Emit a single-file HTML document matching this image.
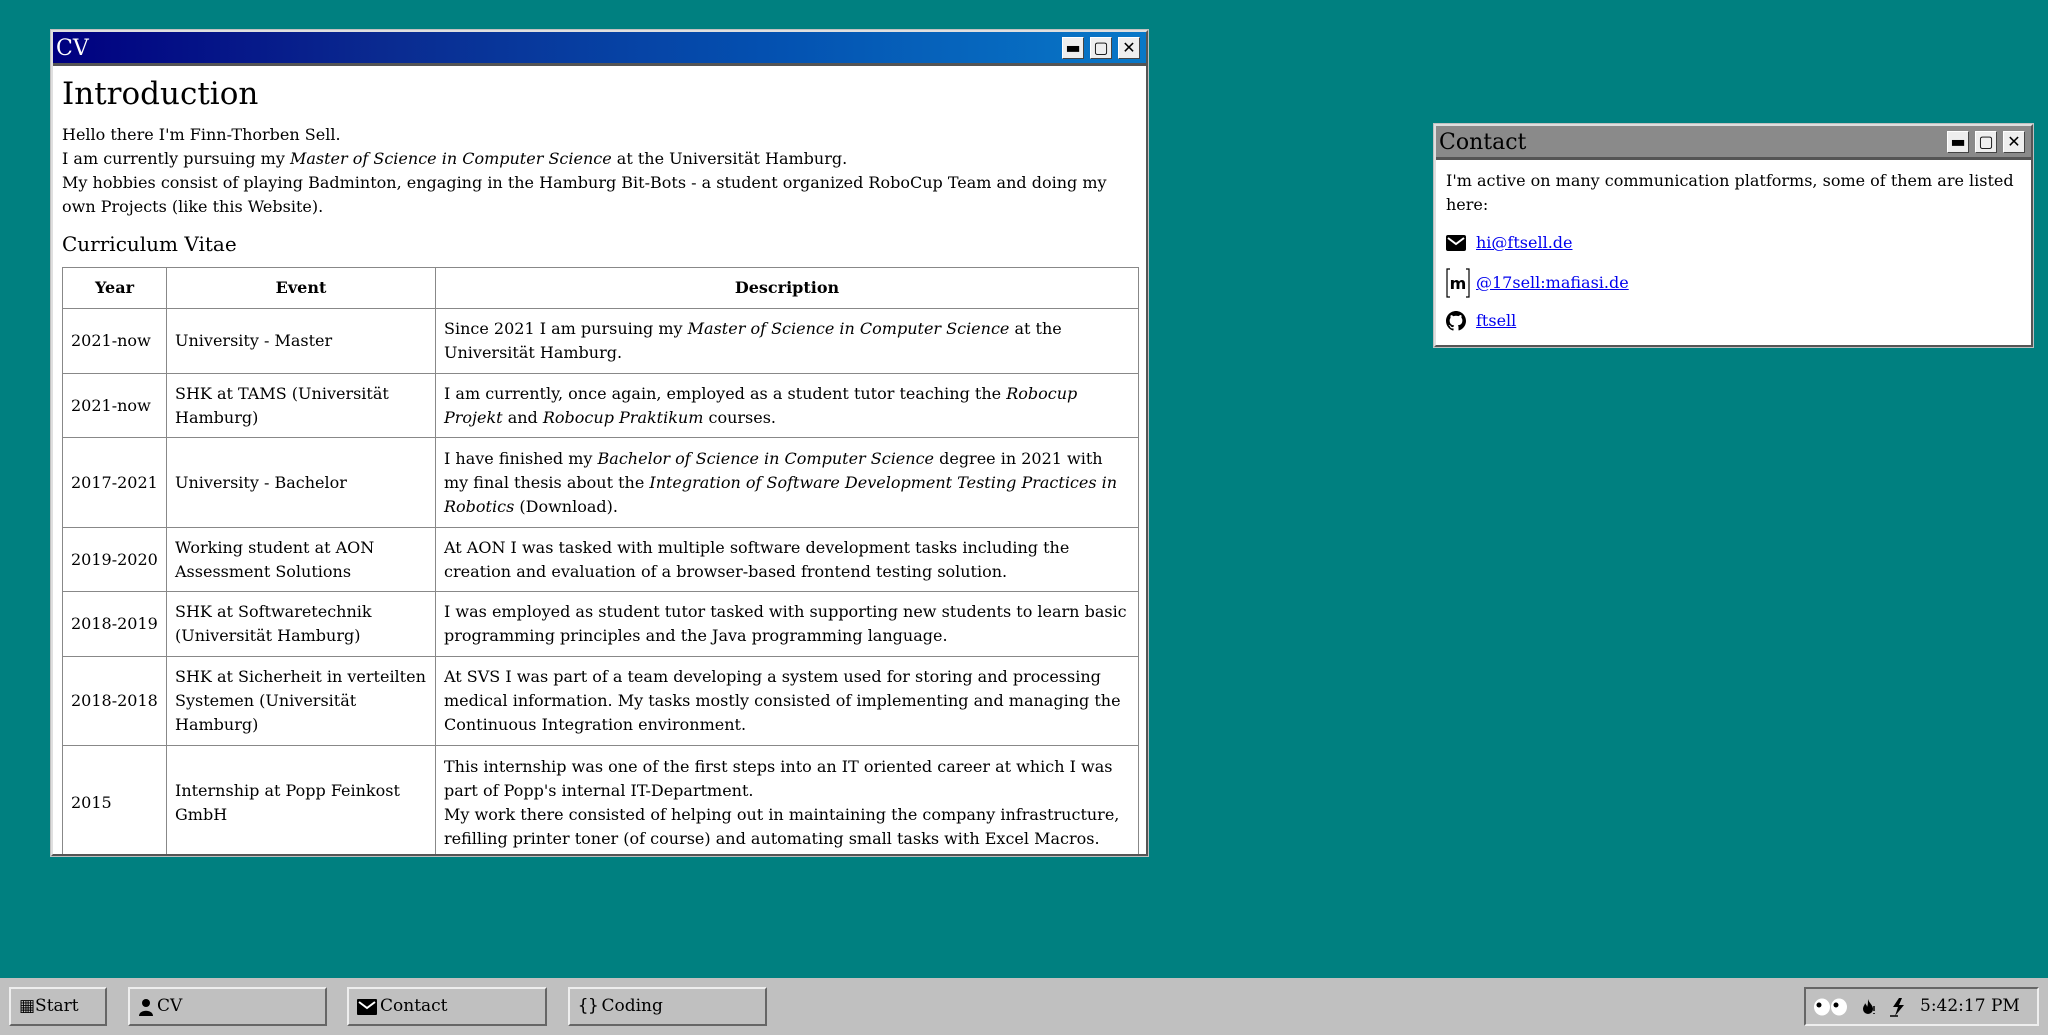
<!DOCTYPE html>
<html><head><meta charset="utf-8"><style>
*{box-sizing:border-box;margin:0;padding:0}
body{width:2048px;height:1035px;background:#008080;position:relative;overflow:hidden;font-family:"DejaVu Serif","Liberation Serif",serif;font-size:16px;line-height:24px;color:#000}
.win{position:absolute;background:#fff;border:2px solid;border-color:#dfdfdf #555 #555 #dfdfdf;outline:1px solid #c0c0c0}
.tb{position:absolute;left:0;right:0;top:0;height:34px;color:#fff;font-size:22px;line-height:34px;padding-left:3px;border-bottom:3px solid #555}
.btns{position:absolute;right:6px;top:5px;display:flex;gap:6px}
.btns span{width:22px;height:22px;background:#eee;border:1px solid;border-color:#fff #444 #444 #fff;display:flex;align-items:center;justify-content:center;color:#000;font-size:16px;line-height:1}
.body{position:absolute;left:6px;right:6px;top:37px;bottom:0;overflow:hidden;padding-left:3px}
h1{font-weight:normal;font-size:31px;line-height:40px;margin-top:5px;margin-bottom:9px}
h2{font-weight:normal;font-size:20px;line-height:28px;margin-top:11px;margin-bottom:9px}
table{border-collapse:collapse;table-layout:fixed;width:1076px}
td,th{border:1px solid #888;padding:5px 8px;vertical-align:middle}
th{height:41px}
a{color:#00e}
.task{position:absolute;left:0;right:0;top:978px;height:57px;background:#c0c0c0}
.tbtn{position:absolute;top:9px;height:39px;border:2px solid;border-color:#eee #666 #666 #eee;font-size:17px;line-height:35px;padding-left:8px;display:flex;align-items:center;gap:3px}
</style></head><body>

<div class="win" style="left:51px;top:30px;width:1097px;height:826px">
 <div class="tb" style="background:linear-gradient(90deg,#000080 0%,#0a2a90 30%,#0450b0 65%,#0878c8 100%)">CV
  <div class="btns"><span>&#9644;</span><span>&#9634;</span><span>&#10005;</span></div></div>
 <div class="body">
  <h1>Introduction</h1>
  <p>Hello there I'm Finn-Thorben Sell.<br>I am currently pursuing my <i>Master of Science in Computer Science</i> at the Universität Hamburg.<br>My hobbies consist of playing Badminton, engaging in the Hamburg Bit-Bots - a student organized RoboCup Team and doing my own Projects (like this Website).</p>
  <h2>Curriculum Vitae</h2>
  <table>
   <colgroup><col style="width:104px"><col style="width:269px"><col style="width:703px"></colgroup>
   <tr><th>Year</th><th>Event</th><th>Description</th></tr>
   <tr style="height:65px"><td>2021-now</td><td>University - Master</td><td>Since 2021 I am pursuing my <i>Master of Science in Computer Science</i> at the Universität Hamburg.</td></tr>
   <tr style="height:64px"><td>2021-now</td><td>SHK at TAMS (Universität Hamburg)</td><td>I am currently, once again, employed as a student tutor teaching the <i>Robocup Projekt</i> and <i>Robocup Praktikum</i> courses.</td></tr>
   <tr style="height:90px"><td style="white-space:nowrap">2017-2021</td><td>University - Bachelor</td><td>I have finished my <i>Bachelor of Science in Computer Science</i> degree in 2021 with my final thesis about the <i>Integration of Software Development Testing Practices in Robotics</i> (Download).</td></tr>
   <tr style="height:64px"><td style="white-space:nowrap">2019-2020</td><td>Working student at AON Assessment Solutions</td><td>At AON I was tasked with multiple software development tasks including the creation and evaluation of a browser-based frontend testing solution.</td></tr>
   <tr style="height:65px"><td style="white-space:nowrap">2018-2019</td><td>SHK at Softwaretechnik (Universität Hamburg)</td><td>I was employed as student tutor tasked with supporting new students to learn basic programming principles and the Java programming language.</td></tr>
   <tr style="height:89px"><td style="white-space:nowrap">2018-2018</td><td>SHK at Sicherheit in verteilten Systemen (Universität Hamburg)</td><td>At SVS I was part of a team developing a system used for storing and processing medical information. My tasks mostly consisted of implementing and managing the Continuous Integration environment.</td></tr>
   <tr style="height:114px"><td>2015</td><td>Internship at Popp Feinkost GmbH</td><td>This internship was one of the first steps into an IT oriented career at which I was part of Popp's internal IT-Department.<br>My work there consisted of helping out in maintaining the company infrastructure, refilling printer toner (of course) and automating small tasks with Excel Macros.</td></tr>
  </table>
 </div>
</div>

<div class="win" style="left:1434px;top:124px;width:599px;height:223px">
 <div class="tb" style="background:#8a8a8a;color:#000">Contact
  <div class="btns"><span>&#9644;</span><span>&#9634;</span><span>&#10005;</span></div></div>
 <div class="body" style="padding-left:4px;padding-top:6px">
  <p>I'm active on many communication platforms, some of them are listed here:</p>
  <div style="margin-top:14px;display:flex;align-items:center;gap:10px;height:24px">
   <svg width="20" height="16" viewBox="0 0 20 16"><rect width="20" height="16" rx="2" fill="#000"/><path d="M2 3 L10 9 L18 3" stroke="#fff" stroke-width="2" fill="none"/></svg><a href="#">hi@ftsell.de</a></div>
  <div style="margin-top:16px;display:flex;align-items:center;gap:6px;height:24px">
   <svg width="24" height="30" viewBox="0 0 24 30"><path d="M4 1H1V29H4M20 1H23V29H20" stroke="#000" stroke-width="1.2" fill="none"/><text x="12" y="21" text-anchor="middle" font-family="DejaVu Sans" font-weight="bold" font-size="16">m</text></svg><a href="#">@17sell:mafiasi.de</a></div>
  <div style="margin-top:14px;display:flex;align-items:center;gap:10px;height:24px">
   <svg width="20" height="20" viewBox="0 0 16 16"><path fill="#000" d="M8 0C3.58 0 0 3.58 0 8c0 3.54 2.290 6.53 5.470 7.590.4.07.55-.17.55-.38v-1.33c-2.23.48-2.7-1.07-2.7-1.070-.36-.92-.89-1.17-.89-1.17-.73-.5.06-.49.06-.49.8.06 1.23.83 1.23.83.71 1.23 1.87.87 2.33.67.07-.52.28-.87.51-1.07-1.78-.2-3.65-.89-3.65-3.95 0-.87.31-1.59.82-2.15-.08-.2-.36-1.02.08-2.12 0 0 .67-.21 2.2.82A7.6 7.6 0 0 1 8 3.8c.68 0 1.36.09 2 .27 1.53-1.04 2.2-.82 2.2-.82.44 1.1.16 1.92.08 2.12.51.56.82 1.27.82 2.15 0 3.07-1.870 3.75-3.65 3.95.29.25.54.73.54 1.48v2.2c0 .21.15.46.55.38A8 8 0 0 0 16 8c0-4.42-3.58-8-8-8z"/></svg><a href="#">ftsell</a></div>
 </div>
</div>

<div class="task">
 <div class="tbtn" style="left:9px;width:98px">&#9638;Start</div>
 <div class="tbtn" style="left:128px;width:199px"><svg width="16" height="18" viewBox="0 0 16 18"><circle cx="8" cy="5" r="4"/><path d="M1 18 C1 11 15 11 15 18Z"/></svg>CV</div>
 <div class="tbtn" style="left:347px;width:200px"><svg width="20" height="16" viewBox="0 0 20 16"><rect width="20" height="16" rx="1"/><path d="M2 3 L10 9 L18 3" stroke="#fff" stroke-width="2" fill="none"/></svg>Contact</div>
 <div class="tbtn" style="left:568px;width:199px;font-family:'DejaVu Sans Mono',monospace">{}<span style="font-family:'DejaVu Serif',serif">Coding</span></div>
 <div class="tbtn" style="left:1804px;width:235px;border-color:#666 #eee #eee #666;gap:12px">
  <svg width="34" height="18" viewBox="0 0 34 18"><ellipse cx="8" cy="9" rx="8" ry="8.5" fill="#fff"/><ellipse cx="25" cy="9" rx="8" ry="8.5" fill="#fff"/><circle cx="5" cy="7" r="2.5"/><circle cx="22" cy="7" r="2.5"/></svg>
  <svg width="16" height="18" viewBox="0 0 16 18"><path d="M8 1C9 5 13 7 13 11a5 5 0 0 1-10 0c0-3 2-4 2-6 1 2 2 2 2 4 1-2 1-5 1-8z" fill="#000"/><path d="M14 8v5M14 15v1" stroke="#000" stroke-width="1.5"/></svg>
  <svg width="20" height="20" viewBox="0 0 20 20"><path d="M11 1L5 10h5l-3 9 9-11h-5l3-7z" fill="#000"/><path d="M2 19H10" stroke="#000" stroke-width="1.5"/></svg>
  <span>5:42:17 PM</span></div>
</div>
</body></html>
